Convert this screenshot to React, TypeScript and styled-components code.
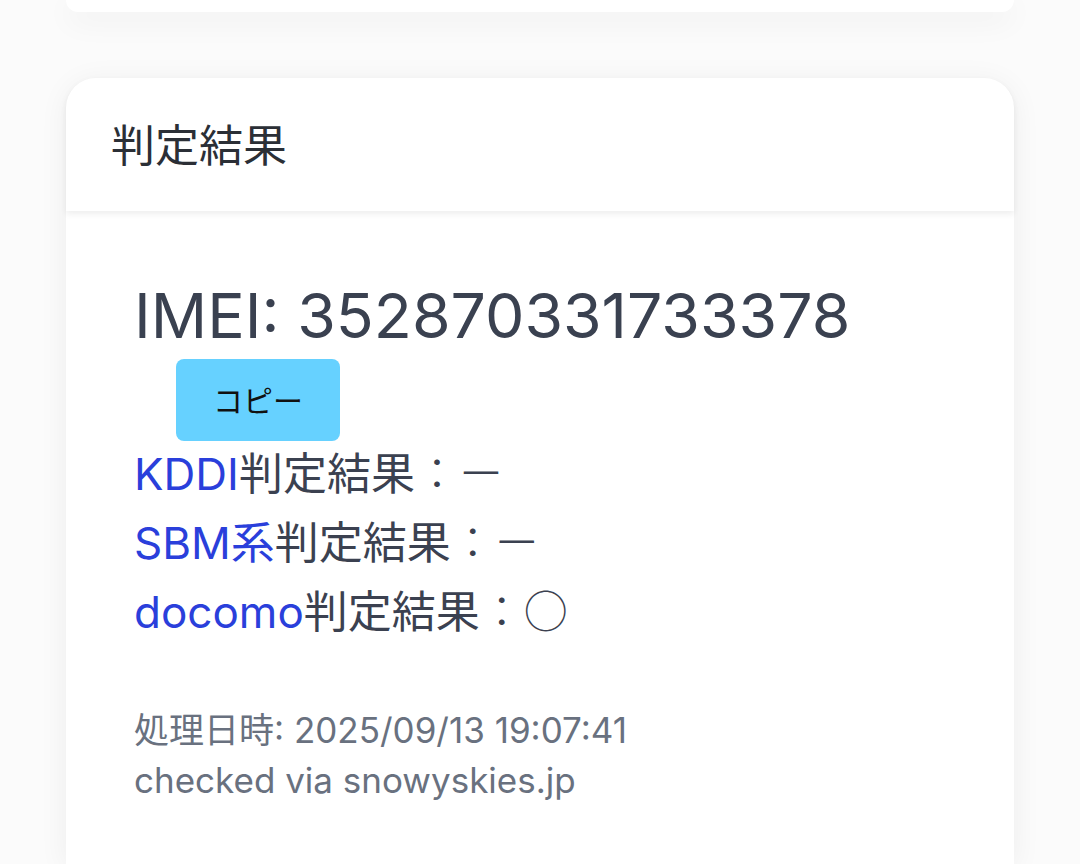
import React from "react";
import styled, { createGlobalStyle } from "styled-components";

const Global = createGlobalStyle`
  html, body { margin: 0; padding: 0; background: #fbfbfb; }
  body { font-family: "Inter", "Noto Sans CJK JP", sans-serif; }
`;

const Page = styled.div`
  display: flex;
  flex-direction: column;
  gap: 66px;
  padding: 0 66px;
  height: 864px;
  overflow: hidden;
`;

const TopCard = styled.div`
  height: 12px;
  background: #fff;
  border-radius: 0 0 30px 30px;
  box-shadow: 0 8px 30px rgba(0, 0, 0, 0.07);
`;

const Card = styled.section`
  background: #fff;
  border-radius: 30px 30px 0 0;
  box-shadow: 0 4px 30px rgba(0, 0, 0, 0.06);
  flex: 1;
`;

const Header = styled.header`
  height: 133px;
  display: flex;
  align-items: center;
  padding: 0 0 4px 45px;
  box-sizing: border-box;
  box-shadow: 0 3px 6px rgba(0, 0, 0, 0.07);
  border-radius: 30px 30px 0 0;
  font-family: "Noto Sans CJK JP", sans-serif;
  font-size: 44px;
  color: #2b2f36;
  font-weight: 400;
`;

const Body = styled.div`
  padding: 73px 68px 0;
  display: flex;
  flex-direction: column;
  align-items: flex-start;
`;

const Imei = styled.div`
  font-size: 62.5px;
  line-height: 62px;
  color: #3a4150;
  font-weight: 400;
`;

const CopyButton = styled.button`
  margin: 13px 0 0 42px;
  width: 164px;
  height: 82px;
  border: none;
  border-radius: 8px;
  background: #66d1ff;
  color: #111;
  font-family: "Noto Sans CJK JP", sans-serif;
  font-size: 30px;
  padding: 0 0 2px;
`;

const Results = styled.div`
  margin-top: -3px;
  display: flex;
  flex-direction: column;
`;

const Line = styled.div`
  font-size: 44px;
  line-height: 66px;
  color: #3b4150;
`;

const Carrier = styled.span`
  color: #2a3fdb;
`;

const Mark = styled.span`
  font-family: "Noto Sans CJK JP", sans-serif;
  font-weight: 300;
`;

const Meta = styled.div`
  margin-top: 60px;
  font-size: 35px;
  line-height: 50px;
  color: #69717f;
`;

export default function App() {
  return (
    <>
      <Global />
      <Page>
        <TopCard />
        <Card>
          <Header>判定結果</Header>
          <Body>
            <Imei>IMEI: 352870331733378</Imei>
            <CopyButton>コピー</CopyButton>
            <Results>
              <Line><Carrier>KDDI</Carrier>判定結果<Mark>：ー</Mark></Line>
              <Line><Carrier>SBM系</Carrier>判定結果<Mark>：ー</Mark></Line>
              <Line><Carrier>docomo</Carrier>判定結果<Mark>：○</Mark></Line>
            </Results>
            <Meta>
              処理日時: 2025/09/13 19:07:41
              <br />
              checked via snowyskies.jp
            </Meta>
          </Body>
        </Card>
      </Page>
    </>
  );
}
